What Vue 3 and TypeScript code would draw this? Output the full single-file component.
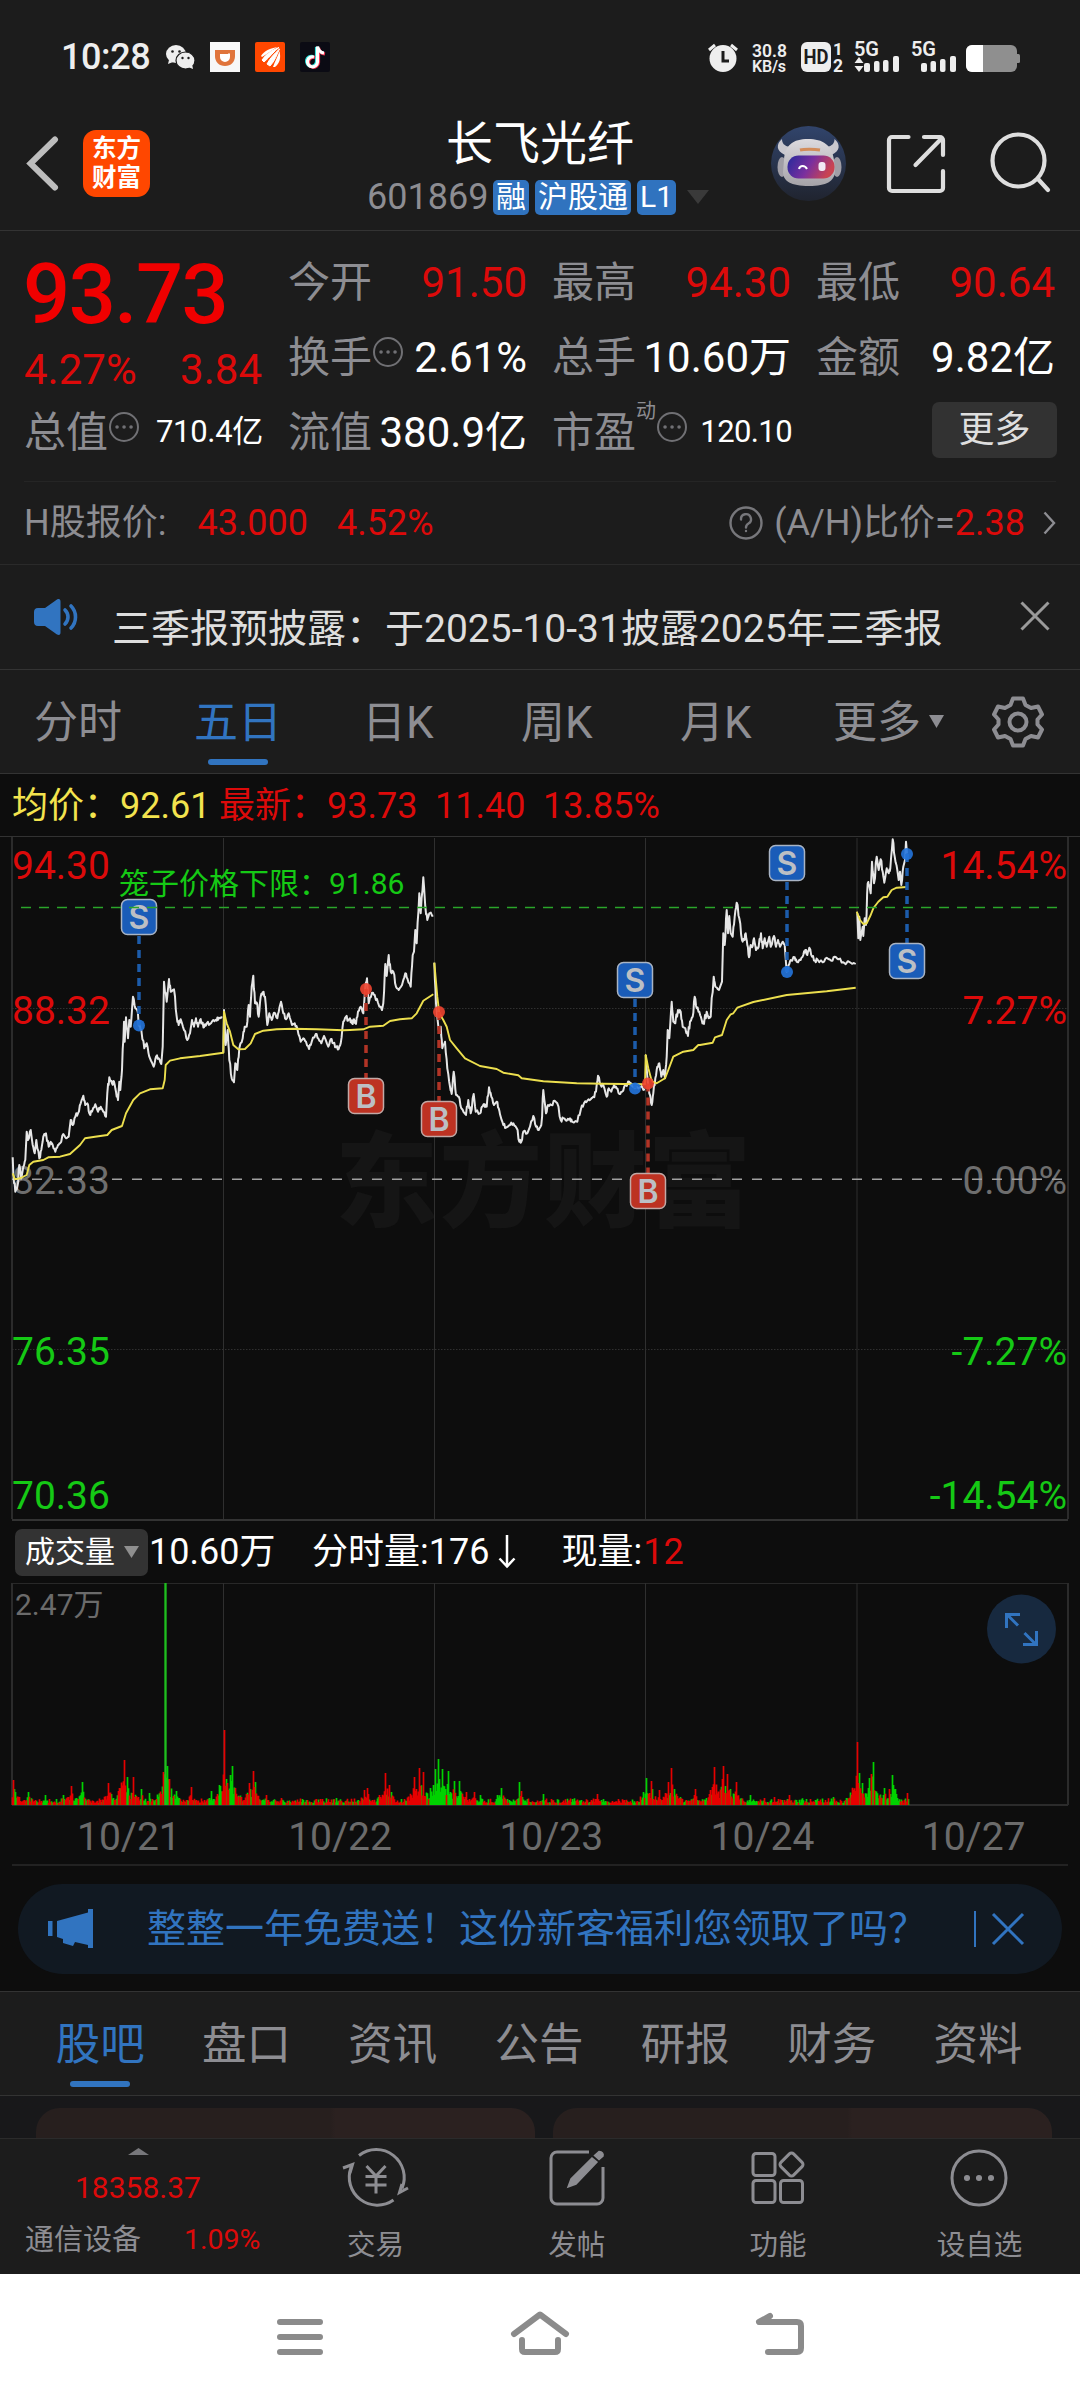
<script setup lang="ts">
interface Quote {
  label: string
  value: string
  tone: 'up' | 'plain'
  info?: boolean
  sup?: string
  small?: boolean
}
interface Marker {
  kind: 'S' | 'B'
  x: number
  box: number
  dot: number
}

const quotes: (Quote | null)[][] = [
  [
    { label: '今开', value: '91.50', tone: 'up' },
    { label: '最高', value: '94.30', tone: 'up' },
    { label: '最低', value: '90.64', tone: 'up' },
  ],
  [
    { label: '换手', value: '2.61%', tone: 'plain', info: true },
    { label: '总手', value: '10.60万', tone: 'plain' },
    { label: '金额', value: '9.82亿', tone: 'plain' },
  ],
  [
    { label: '流值', value: '380.9亿', tone: 'plain' },
    { label: '市盈', value: '120.10', tone: 'plain', info: true, sup: '动', small: true },
    null,
  ],
]

const dates = ['10/21', '10/22', '10/23', '10/24', '10/27']
const newsTabs = ['股吧', '盘口', '资讯', '公告', '研报', '财务', '资料']

const markers: Marker[] = [
  { kind: 'S', x: 139, box: 917, dot: 1025.5 },
  { kind: 'B', x: 366, box: 1096, dot: 989 },
  { kind: 'B', x: 439, box: 1119, dot: 1012 },
  { kind: 'S', x: 635, box: 980, dot: 1088.5 },
  { kind: 'B', x: 648, box: 1191, dot: 1083.5 },
  { kind: 'S', x: 787, box: 863, dot: 972 },
  { kind: 'S', x: 907, box: 961, dot: 854 },
]

// Samples are stored in thirds of a pixel, relative to the left edge of their block.
const ORIGIN_Y = 830
const UNIT = 3

type Block = [number, string]

function hash(n: number): number {
  const v = Math.sin(n * 127.1) * 43758.5453
  return v - Math.floor(v)
}

function parse(blocks: Block[]): number[][] {
  const out: number[][] = []
  for (const [ox, text] of blocks) {
    for (const pair of text.trim().split(/\s+/)) {
      const [x, y] = pair.split(',').map(Number)
      out.push([ox + x / UNIT, ORIGIN_Y + y / UNIT])
    }
  }
  return out
}

function toPath(points: number[][]): string {
  return 'M' + points.map((p) => p[0].toFixed(1) + ' ' + p[1].toFixed(1)).join('L')
}

function jagged(blocks: Block[]): string {
  const pts = parse(blocks)
  const out: number[][] = [pts[0]]
  for (let i = 1; i < pts.length; i++) {
    const [ax, ay] = pts[i - 1]
    const [bx, by] = pts[i]
    const swing = (hash(i * 3.7 + ax) - 0.5) * (Math.abs(by - ay) > 12 ? 9 : 4.5)
    if (bx - ax > 1.4) {
      out.push([ax + (bx - ax) * 0.36, ay + (by - ay) * 0.36 + swing])
      out.push([ax + (bx - ax) * 0.68, ay + (by - ay) * 0.68 - swing * 0.6])
    }
    out.push([bx, by])
  }
  return toPath(out)
}

const priceLines: string[] = [
  jagged([[0, '38,982 40,1030 46,1085 52,1070 58,1005 64,1045 70,1010 76,990 80,905 84,930 92,900 98,945 104,970 109,930 118,985 124,960 130,920 138,910 146,950 152,935 158,945 166,965 174,945 180,940 190,912 198,925 206,920 212,870 218,885 226,860 234,850 242,820 250,797 256,825 262,820 268,850 276,845 286,823 294,845 302,830 310,845 318,860 322,790 328,742 336,760 342,755 348,785 354,810 358,755 361,780 366,720 372,575 374,635 378,562 384,625 388,570 392,590 399,500 406,535 412,540 417,587 424,600 433,655 440,640 448,680 461,710 468,680 476,685 484,702 488,650 492,455 500,515 507,447 512,485 522,478 530,560 536,585 542,568 552,600 562,630 570,610 576,570 582,590 588,565 594,590 600,570 606,580 612,592 620,580 630,582 640,570 650,572 656,563 667,563']]),
  jagged([
    [0, '670,668 672,540 677,645 683,600 688,690 695,745 702,757 706,700 712,720 718,655 728,625 734,590 740,590 746,525 750,560 755,470 760,437 765,520 770,518 776,560 782,500 788,487 795,500 802,585 808,550 815,570 822,548 832,565 838,535 843,515 850,550 858,568 866,550 876,585 884,580 892,595 902,635 910,625 918,635 927,657 935,635 947,612 955,625 964,640 972,618 985,650 992,628 1000,640 1008,652 1016,657 1022,640 1030,575 1038,560 1044,572'],
    [350, '0,565 6,580 12,568 18,582 24,545 32,530 40,550 46,470 51,445 56,520 66,488 74,495 84,518 96,540 100,520 106,402 110,438 116,375 122,425 130,425 138,470 146,480 156,465 166,430 172,445 182,470 188,375 192,365 196,300 200,340 208,190 212,250 220,142 226,230 232,270 238,250 250,257'],
  ]),
  jagged([[350, '253,398 258,520 262,560 266,600 272,590 277,655 285,635 292,715 300,770 305,792 311,725 318,795 326,800 334,835 344,850 348,855 355,810 362,850 371,792 377,845 390,850 396,830 402,822 410,830 417,772 424,800 432,825 440,815 446,835 452,860 460,885 468,893 480,885 490,880 500,895 508,935 514,935 520,905 532,910 540,890 550,858 558,890 566,900 574,885 580,780 588,850 594,825 604,825 614,812 622,820 632,870 640,865 650,872 660,865 666,875 682,875 692,840 702,820 712,812 722,808 730,800 738,785 744,737 752,765 760,765 770,800 776,775 784,785 792,765 800,775 808,792 816,785 826,765 838,755 844,765 855,775 870,772 885,778']]),
  jagged([
    [350, '887,675 892,740 898,790 905,825 910,790 916,745 922,710 928,700 934,740 940,720 945,745 950,680 953,600 958,625 965,515 970,575 976,580 984,540 992,545 998,590 1006,595 1014,618 1020,575 1028,560 1034,500 1040,535 1048,545'],
    [700, '5,570 12,582 20,545 26,565 32,560 41,440 46,470 57,480 66,455 70,310 74,345 80,240 84,310 88,258 92,310 98,320 104,260 110,218 118,265 126,330 132,330 137,310 142,345 147,382 152,345 156,352 162,325 168,360 176,350 183,310 188,355 194,325 200,350 208,320 212,350 222,318 228,350 234,330 240,350 248,335 254,345 260,425 266,405 272,390 284,382 290,395 302,390 310,375 316,360 322,375 328,353 336,380 345,392 352,388 368,397 380,383 394,392 404,380 415,388 430,397 450,397 467,402'],
  ]),
  jagged([[700, '472,250 475,325 478,260 481,330 488,290 490,318 494,265 498,285 503,160 508,165 512,190 516,95 522,160 530,80 536,120 542,88 548,125 553,158 560,115 566,130 571,115 578,28 584,80 592,120 596,150 600,125 604,165 610,110 615,90 618,35 621,70']]),
]

const averageLines: string[] = [
  toPath(parse([[0, '38,1030 45,1048 60,1045 80,1035 88,1005 100,995 130,990 145,982 180,980 210,972 240,945 255,925 285,920 322,915 335,900 366,888 378,850 400,810 420,790 450,778 488,775 494,750 497,705 510,692 540,685 600,678 670,668 672,545 680,580 690,605 700,645 715,658 735,657 752,640 765,612 790,602 830,598 880,596 950,598 1030,601'], [350, '0,600 40,598 60,590 100,587 120,573 150,568 185,565 200,550 220,512 250,493']])),
  toPath(parse([[350, '253,398 262,500 268,550 280,570 290,590 300,630 320,655 345,685 390,708 440,717 460,728 505,736 515,745 580,754 680,760 760,761 885,763 887,675 895,715 903,745 908,755 920,760 945,745 955,720 970,680 1000,665 1030,660 1045,645'], [700, '0,645 38,638 45,622 66,615 80,570 92,553 100,550 112,533 160,516 260,495 380,484 467,473']])),
  toPath(parse([[700, '470,245 480,270 490,282 500,280 512,255 520,235 535,215 550,202 562,200 575,180 590,173 620,171']])),
]

// Volume peaks: x, height, direction (1 = up, 0 = down)
const peaks: [number, number, number][] = [
  [13, 25, 1], [15, 13, 0], [28, 13, 0], [45, 10, 0], [63, 10, 0], [71, 19, 1], [82, 23, 0], [108, 22, 1], [118, 11, 0],
  [124, 45, 1], [127, 28, 0], [133, 28, 1], [141, 16, 0], [149, 12, 0], [163, 33, 1], [165, 222, 0], [167, 39, 0], [169, 26, 1],
  [176, 14, 0], [191, 18, 1], [211, 14, 0], [219, 20, 0], [224, 75, 1], [226, 26, 0], [230, 30, 0], [232, 39, 0], [235, 17, 1],
  [249, 22, 1], [253, 34, 1], [255, 23, 0], [266, 10, 1], [281, 7, 1], [300, 6, 0], [336, 7, 0], [364, 15, 1], [367, 17, 1],
  [385, 32, 1], [389, 20, 1], [391, 13, 0], [414, 28, 1], [419, 37, 1], [423, 33, 1], [430, 17, 0], [435, 36, 0], [438, 46, 0],
  [442, 36, 0], [448, 34, 0], [454, 24, 0], [459, 24, 0], [466, 13, 1], [474, 13, 1], [480, 10, 0], [497, 10, 0], [501, 17, 0],
  [519, 23, 0], [521, 14, 1], [543, 11, 0], [597, 11, 1], [624, 5, 1], [646, 27, 0], [651, 24, 1], [659, 15, 1], [668, 23, 1],
  [671, 37, 1], [674, 16, 0], [695, 16, 1], [714, 38, 1], [723, 39, 1], [727, 31, 1], [730, 16, 0], [736, 23, 1], [750, 10, 0],
  [764, 7, 1], [774, 8, 1], [789, 10, 1], [833, 8, 0], [853, 14, 0], [857, 63, 1], [859, 32, 0], [862, 22, 0], [869, 27, 0],
  [871, 31, 1], [873, 43, 0], [884, 17, 0], [889, 16, 1], [892, 30, 0], [895, 16, 0], [907, 12, 1],
]
const VOLUME_BASE = 1805

function volumeBars(): { up: string; down: string } {
  const bars: Record<'up' | 'down', string> = { up: '', down: '' }
  for (let x = 12; x < 909; x += 1) {
    const n = hash(x * 1.37)
    let h = 2.2 + n * n * 4.5
    let up = hash(x * 5.11) > 0.5
    for (const [px, ph, dir] of peaks) {
      const d = Math.abs(px - x)
      const local = d === 0 ? ph : Math.min(ph, 46) * 0.62 * Math.exp(-d / 7) * (0.5 + n * 0.75)
      if (local > h) {
        h = local
        if (d === 0) up = dir === 1
        else if (d < 8) up = hash(x * 9.3) < (dir === 1 ? 0.72 : 0.28)
      }
    }
    bars[up ? 'up' : 'down'] += `M${x + 0.5} ${VOLUME_BASE}v${(-h).toFixed(1)}`
  }
  return bars
}
const volume = volumeBars()
</script>

<template>
  <div class="screen">
    <div class="status">
      <span class="clock">10:28</span>
      <svg class="apps" width="166" height="32" viewBox="165 41 166 32">
        <ellipse cx="176" cy="54" rx="10" ry="9" fill="#eee" />
        <path d="M169 60l-1 4 5-2z" fill="#eee" />
        <circle cx="172.500" cy="51.500" r="1.300" fill="#1c1c1c" /><circle cx="179.500" cy="51.500" r="1.300" fill="#1c1c1c" />
        <ellipse cx="185.500" cy="60.500" rx="9.500" ry="8.500" fill="#eee" stroke="#1c1c1c" stroke-width="1.200" />
        <path d="M188 67l5 2-1-5z" fill="#eee" />
        <circle cx="182.500" cy="58" r="1.200" fill="#1c1c1c" /><circle cx="188.500" cy="58" r="1.200" fill="#1c1c1c" />
        <rect x="210" y="42" width="30" height="30" fill="#f7f7f7" />
        <path d="M215 50h20v6c0 6-4 10-10 10s-10-4-10-10z" fill="#e0743b" />
        <path d="M220 54h8l1-1 1 1v3a5 5 0 0 1-10 0z" fill="#fff" />
        <rect x="255" y="42" width="30" height="30" rx="2" fill="#ff4700" />
        <g fill="#fff">
          <path d="M261 56C264 51 270 48 278 47C273 49 269 53 262 57z" />
          <path d="M262 60C266 54 272 50 279 47.500C274 51 270 57 264 62z" stroke="#fff" />
          <path d="M267 64C270 58 275 53 279.500 49C277 54 275 61 270 66z" stroke="#fff" />
          <path d="M273 67C275 61 278 56 279.500 51C281 58 280 63 275 67z" />
        </g>
        <rect x="300" y="42" width="30" height="30" rx="2" fill="#0b0b14" />
        <g fill="none" stroke-width="3.200">
          <path d="M313 56.500a5 5 0 1 0 3.500 5V47c1 4 3 5.500 6.500 6" stroke="#25e0dc" />
          <path d="M315 57.500a5 5 0 1 0 3.500 5V48c1 4 3 5.500 6.500 6" stroke="#f5304f" />
          <path d="M314 57a5 5 0 1 0 3.500 5V46.500c1 4.500 3 6 6.500 6.500" stroke="#fff" />
        </g>
      </svg>
      <svg class="signals" width="316" height="50" viewBox="706 32 316 50" fill="#eee">
        <circle cx="723" cy="58.500" r="13.500" />
        <path d="M709 50l6-5M737 50l-6-5" stroke="#eee" stroke-width="3" />
        <path d="M723 51v10h6" stroke="#1c1c1c" stroke-width="3" fill="none" />
        <text x="752" y="56.500" font-size="18.500" font-weight="600" textLength="35" lengthAdjust="spacingAndGlyphs">30.8</text>
        <text x="752" y="71.500" font-size="16" font-weight="600" textLength="34">KB/s</text>
        <rect x="801" y="42" width="30" height="30" rx="6" />
        <text x="803.500" y="64" font-size="19.500" font-weight="700" textLength="25" lengthAdjust="spacingAndGlyphs" fill="#1c1c1c">HD</text>
        <text x="833" y="54.500" font-size="17" font-weight="700">1</text>
        <text x="833" y="72" font-size="17.500" font-weight="700">2</text>
        <text x="854" y="56" font-size="20" font-weight="600" textLength="25">5G</text>
        <path d="M859 57l4.500 6h-9zM859 72l4.500-6h-9z" />
        <rect x="864" y="63" width="6" height="9" rx="2" /><rect x="874" y="61" width="5.500" height="11" rx="2" /><rect x="883" y="60" width="5.500" height="12" rx="2" /><rect x="893" y="56" width="6" height="16" rx="2" />
        <text x="911" y="56" font-size="20" font-weight="600" textLength="25">5G</text>
        <rect x="921" y="63" width="6" height="9" rx="2" /><rect x="930.500" y="61" width="5.500" height="11" rx="2" /><rect x="940" y="59" width="5.500" height="13" rx="2" /><rect x="950" y="56" width="6" height="16" rx="2" />
        <rect x="966" y="45" width="51" height="27" rx="6" fill="#8f8f8f" />
        <path d="M972 45h11v27h-11a6 6 0 0 1-6-6V51a6 6 0 0 1 6-6z" fill="#fff" />
        <rect x="1015" y="54" width="5" height="9" rx="1.500" fill="#8f8f8f" />
      </svg>
    </div>

    <header class="header">
      <div class="head-left">
        <svg width="34" height="60" viewBox="25 133 34 60"><path d="M55 139.500L30.500 163.500L55 187.500" fill="none" stroke="#bdbdbd" stroke-width="6" stroke-linecap="round" /></svg>
        <div class="logo"><span>东方</span><span>财富</span></div>
      </div>
      <div class="title-block">
        <h1>长飞光纤</h1>
        <div class="code-row">
          <span class="code">601869</span>
          <span class="tag one">融</span>
          <span class="tag three">沪股通</span>
          <span class="tag level">L1</span>
          <svg class="drop" width="22" height="14"><path d="M0 0h22L11 14z" fill="#3a3a3a" /></svg>
        </div>
      </div>
      <div class="head-right">
        <svg width="282" height="78" viewBox="770 125 282 78" fill="none">
          <defs>
            <linearGradient id="visor" x1="0" x2="1" y1="0" y2=".3">
              <stop offset="0" stop-color="#252a9c" /><stop offset=".55" stop-color="#7a2f9e" /><stop offset="1" stop-color="#c94352" />
            </linearGradient>
            <linearGradient id="sky" x1="0" x2="0" y1="0" y2="1">
              <stop offset="0" stop-color="#31446b" /><stop offset="1" stop-color="#20242f" />
            </linearGradient>
            <linearGradient id="shell" x1="0" x2="0" y1="0" y2="1">
              <stop offset="0" stop-color="#dcdade" /><stop offset="1" stop-color="#a5a3a8" />
            </linearGradient>
          </defs>
          <circle cx="808.500" cy="163.500" r="37.500" fill="url(#sky)" />
          <path d="M782 139c-6 5-6 12 3 16l5-8c-6-1-8-4-8-8zM834.500 139c6 5 6 12-3 16l-5-8c6-1 8-4 8-8z" fill="#c9c8ce" />
          <ellipse cx="782" cy="167" rx="4.500" ry="10" fill="#a09ea6" /><ellipse cx="837" cy="167" rx="4.500" ry="10" fill="#a09ea6" />
          <path d="M784 160c1-15 9-21 24-21s24 6 26 21l1 12c-1 9-8 14-26 14s-26-5-26-14z" fill="url(#shell)" />
          <rect x="787.500" y="155.500" width="47" height="23" rx="11" fill="url(#visor)" />
          <path d="M799 169c1-4 6-4 8 0" stroke="#fff" stroke-width="2" />
          <rect x="818.500" y="162" width="7" height="9" rx="3" fill="#f2e9f4" />
          <path d="M800 150c4-1 14-1 20 0" stroke="#d38c5a" stroke-width="3" />
          <g stroke="#dedede" stroke-width="4.200" stroke-linecap="round" stroke-linejoin="round">
            <path d="M908.500 137H892a3 3 0 0 0-3 3v48a3 3 0 0 0 3 3h48a3 3 0 0 0 3-3v-17M924 137h16a3 3 0 0 1 3 3v15M915.500 165L942 138" />
            <circle cx="1018.500" cy="160.500" r="26" />
            <path d="M1038 179l10 11" />
          </g>
        </svg>
      </div>
    </header>

    <section class="quote">
      <div class="grid">
        <div class="main-col">
          <div class="price">93.73</div>
          <div class="change"><span>4.27%</span><span>3.84</span></div>
          <div class="cell">
            <span class="lab">总值</span>
            <svg class="info" width="30" height="30"><circle cx="15" cy="15" r="14" /><path d="M8 15h.1M15 15h.1M22 15h.1" /></svg>
            <span class="val small">710.4亿</span>
          </div>
        </div>
        <div class="rows">
          <div v-for="(row, r) in quotes" :key="r" class="row">
            <template v-for="(q, c) in row" :key="c">
              <div v-if="q" class="cell">
                <span class="lab">{{ q.label }}</span>
                <span v-if="q.sup" class="sup">{{ q.sup }}</span>
                <svg v-if="q.info" class="info" width="30" height="30"><circle cx="15" cy="15" r="14" /><path d="M8 15h.1M15 15h.1M22 15h.1" /></svg>
                <span class="val" :class="[q.tone, { small: q.small }]">{{ q.value }}</span>
              </div>
              <div v-else class="cell end"><button class="more">更多</button></div>
            </template>
          </div>
        </div>
      </div>
      <div class="h-share">
        <span>H股报价:</span><span class="red first">43.000</span><span class="red second">4.52%</span>
        <svg class="help" width="34" height="34"><circle cx="17" cy="17" r="15.500" /><path d="M12 13.500a5 5 0 1 1 7.500 4c-2 1.200-2.500 2-2.500 4M17 25v.1" /></svg>
        <span>(A/H)比价=<b>2.38</b></span>
        <svg class="chev" width="13" height="24"><path d="M1.500 1.500L11 12L1.500 22.500" /></svg>
      </div>
    </section>

    <section class="notice">
      <svg width="46" height="38" viewBox="33 597 46 38" fill="#3174c0">
        <path d="M38 607h7l12-8.500c2.500-1 3.500 0 3.500 2v31c0 2-1 3-3.500 2L45 625h-7c-3 0-4-2-4-4v-10c0-2 1-4 4-4z" />
        <path d="M65 609c4 4 4 10 0 14M71 605c6 6 6 16 0 22" fill="none" stroke="#3174c0" stroke-width="3.600" stroke-linecap="round" />
      </svg>
      <p>三季报预披露：于2025-10-31披露2025年三季报</p>
      <svg class="close" width="30" height="30"><path d="M1.500 1.500l27 27M28.500 1.500l-27 27" /></svg>
    </section>

    <nav class="period">
      <span class="t1">分时</span><span class="t2 active">五日</span><span class="t3">日K</span><span class="t4">周K</span><span class="t5">月K</span><span class="t6">更多</span>
      <svg class="tri" width="15" height="13"><path d="M0 0h15L7.500 13z" fill="#8d8d92" /></svg>
      <svg class="gear" width="54" height="54" viewBox="-27 -27 54 54" fill="none" stroke="#8d8d92" stroke-width="4">
        <path d="M-5-23.500H5L7.500-17L13-14L20-15.500L24-7.500L19.500-2.500V2.500L24 7.500L20 15.500L13 14L7.500 17L5 23.500H-5L-7.500 17L-13 14L-20 15.500L-24 7.500L-19.500 2.500V-2.500L-24-7.500L-20-15.500L-13-14L-7.500-17z" stroke-linejoin="round" />
        <circle r="8.500" />
      </svg>
    </nav>

    <section class="market">
      <div class="averages">
        <span class="avg">均价：92.61</span><span class="red latest">最新：93.73</span><span class="red delta">11.40</span><span class="red pct">13.85%</span>
      </div>

      <svg class="chart" width="1080" height="686" viewBox="0 835 1080 686">
        <text class="watermark" x="335" y="1219" font-size="103" textLength="416">东方财富</text>
        <path d="M0 836.500H1080" stroke="#323232" />
        <path d="M12 837V1519M1068 837V1519" stroke="#2b2b2b" stroke-width="2" />
        <path d="M223.500 838V1519M434.500 838V1519M645.500 838V1519M857 838V1519" stroke="#2f2f2f" />
        <path d="M12 1008.500H1068M12 1349.500H1068" stroke="#303030" stroke-dasharray="1.500 1.500" />
        <path d="M12 1520H1068" stroke="#333" stroke-width="2" />

        <g class="axis" font-size="39">
          <text x="12" y="879" class="up">94.30</text>
          <text x="12" y="1023.500" class="up">88.32</text>
          <text x="12" y="1193.500" class="flat">82.33</text>
          <text x="12" y="1365" class="down">76.35</text>
          <text x="12" y="1509" class="down">70.36</text>
          <g text-anchor="end">
            <text x="1067" y="879" class="up">14.54%</text>
            <text x="1067" y="1023.500" class="up">7.27%</text>
            <text x="1067" y="1193.500" class="flat">0.00%</text>
            <text x="1067" y="1365" class="down">-7.27%</text>
            <text x="1067" y="1509" class="down">-14.54%</text>
          </g>
        </g>
        <text x="119" y="893.500" font-size="30" class="down">笼子价格下限：91.86</text>

        <path d="M12 1179.200H1062" stroke="#a0a0a0" stroke-width="1.500" stroke-dasharray="10 10" />
        <g fill="none" stroke-linejoin="round">
          <path v-for="(d, i) in priceLines" :key="'p' + i" :d="d" stroke="#e6e6e6" stroke-width="2" />
          <path v-for="(d, i) in averageLines" :key="'a' + i" :d="d" stroke="#ecdf4e" stroke-width="1.900" />
        </g>
        <g v-for="(m, i) in markers" :key="i" :class="m.kind === 'S' ? 'sell' : 'buy'">
          <path class="stem" :d="m.box < m.dot ? `M${m.x} ${m.box + 19}V${m.dot}` : `M${m.x} ${m.dot}V${m.box - 17}`" />
          <circle :cx="m.x" :cy="m.dot" r="6" />
          <rect :x="m.x - 17.500" :y="m.box - 17.500" width="35" height="35" rx="6" />
          <text :x="m.x" :y="m.box + 11.500" font-size="32" text-anchor="middle">{{ m.kind }}</text>
        </g>
        <path d="M21 907.500H1058" stroke="#2aa52a" stroke-width="1.300" stroke-dasharray="10 8" />
      </svg>

      <div class="vol-head">
        <div class="vol-btn">成交量<svg width="15" height="12"><path d="M0 0h15L7.500 12z" fill="#8f8f8f" /></svg></div>
        <span class="v1">10.60万</span><span class="v2">分时量:176</span>
        <svg class="arrow" width="18" height="34"><path d="M9 0v31M1.500 23.500L9 31.500L16.500 23.500" fill="none" stroke="#fff" stroke-width="2.500" /></svg>
        <span class="v3">现量:<i>12</i></span>
      </div>

      <svg class="chart" width="1080" height="224" viewBox="0 1583 1080 224">
        <path d="M12 1583.500H1068" stroke="#282828" />
        <path d="M12 1583V1805M1068 1583V1805" stroke="#2b2b2b" stroke-width="2" />
        <path d="M223.500 1583V1805M434.500 1583V1805M645.500 1583V1805M857 1583V1805" stroke="#2f2f2f" />
        <path d="M12 1805H1068" stroke="#2b2b2b" stroke-width="2" />
        <text x="15" y="1615" font-size="30" fill="#6b6b6b">2.47万</text>
        <path :d="volume.down" stroke="#00d200" stroke-width="1.700" />
        <path :d="volume.up" stroke="#e60000" stroke-width="1.700" />
        <path d="M165.500 1805V1583" stroke="#22bb22" stroke-width="2" />
        <circle cx="1021.500" cy="1629" r="34.500" fill="#17293f" />
        <path d="M1018 1625.500L1007 1614.500M1020 1614.500H1006.500V1628M1024.500 1633L1036 1644.500M1023 1644.500H1036.500V1631" fill="none" stroke="#3174c0" stroke-width="3" />
      </svg>

      <div class="dates"><span v-for="d in dates" :key="d">{{ d }}</span></div>

      <div class="banner">
        <svg width="46" height="40" viewBox="47 1909 46 40" fill="#3174c0"><path d="M48 1921h4.500v15H48zM57 1921l31-8.500V1909h5v39h-5v-3l-13-3-2 4-10-3v-4l-6-2z" /></svg>
        <p>整整一年免费送！这份新客福利您领取了吗？</p>
        <i></i>
        <svg class="bclose" width="34" height="34"><path d="M2 2l30 30M32 2L2 32" /></svg>
      </div>
    </section>

    <nav class="news-tabs">
      <span v-for="(t, i) in newsTabs" :key="t" :class="{ active: i === 0 }">{{ t }}</span>
    </nav>

    <section class="cards"><div></div><div></div></section>

    <footer class="bottom">
      <div class="index">
        <svg width="21" height="7"><path d="M0 7L10.500 0L21 7z" fill="#77777b" /></svg>
        <div class="points">18358.37</div>
        <div class="sector"><span>通信设备</span><span class="red">1.09%</span></div>
      </div>
      <div class="action">
        <svg width="68" height="60" viewBox="-34 -30 68 60">
          <path d="M-17-22.500A28 28 0 0 1 26 10.500M17.500 22A28 28 0 0 1-25-10.500M-33-10L-23.500-13.500L-26-5M32 10L23.500 14.500L26 6" />
          <path d="M-9.500-12L0-2L9.500-12M0-2V15.500M-10.500-1.500H10.500M-10.500 7H10.500" />
        </svg><span>交易</span>
      </div>
      <div class="action">
        <svg width="60" height="60" viewBox="-30 -30 60 60">
          <path d="M12-26H-20a6 6 0 0 0-6 6V20a6 6 0 0 0 6 6H20a6 6 0 0 0 6-6V-11" />
          <path d="M-9 9L-6 1L15-20L20-16L-1 6zM17.500-22.500L22-26.500Q27-26 26-22L22-18.500z" class="solid" />
        </svg><span>发帖</span>
      </div>
      <div class="action">
        <svg width="60" height="60" viewBox="-30 -30 60 60">
          <rect x="-25" y="-24.500" width="22" height="22" rx="3" /><rect x="-25" y="2.500" width="22" height="22" rx="3" /><rect x="2.500" y="2.500" width="22" height="22" rx="3" />
          <rect x="4.500" y="-22.500" width="18" height="18" rx="3" transform="rotate(45 13.500 -13.500)" />
        </svg><span>功能</span>
      </div>
      <div class="action">
        <svg width="60" height="60" viewBox="-30 -30 60 60"><circle r="27" /><g class="solid"><circle cx="-12" r="2.300" /><circle r="2.300" /><circle cx="12" r="2.300" /></g></svg><span>设自选</span>
      </div>
    </footer>

    <div class="sysnav">
      <svg width="1080" height="126" viewBox="0 2274 1080 126" fill="none" stroke="#8b8b8b" stroke-width="6" stroke-linecap="round" stroke-linejoin="round">
        <path d="M280 2322H320M280 2337H320M280 2352H320" />
        <path d="M514 2334L540 2314.500L566 2334M522 2340V2349Q522 2352 525 2352H555Q558 2352 558 2349V2340" />
        <path d="M770 2316L759 2322H797Q801 2322 801 2326V2348Q801 2352 797 2352H768" />
      </svg>
    </div>
  </div>
</template>

<style>
body { margin: 0; background: #1c1c1c; }
</style>

<style scoped>
.screen {
  width: 1080px;
  height: 2400px;
  overflow: hidden;
  background: #1c1c1c;
  color: #8d8d92;
  font-family: Roboto, "Noto Sans CJK SC", sans-serif;
}
svg { display: block; flex: none; }
span { white-space: nowrap; }
.red { color: #dc0a0a; }

.status { height: 114px; display: flex; align-items: center; padding: 0 58px 0 61px; box-sizing: border-box; }
.clock { font-size: 36px; font-weight: 500; color: #eee; letter-spacing: -0.4px; width: 104px; }
.signals { margin-left: auto; overflow: visible; }

.header { height: 116px; display: grid; grid-template-columns: 1fr auto 1fr; border-bottom: 1px solid #333; }
.head-left { display: flex; align-items: center; padding-left: 25px; gap: 24px; height: 98px; }
.logo {
  width: 67px; height: 67px; border-radius: 13px; background: #ff4700; color: #fff;
  display: flex; flex-direction: column; align-items: center; justify-content: center;
  font-size: 24.500px; font-weight: 700; line-height: 29px;
}
.title-block { padding-top: 2px; text-align: center; }
h1 { margin: 0; font-size: 47px; line-height: 56px; font-weight: 400; color: #fff; }
.code-row { display: flex; align-items: center; height: 36px; margin: 7px 4px 0 0; }
.code { font-size: 36px; width: 121px; }
.tag { height: 35px; line-height: 34px; margin-left: 6px; border-radius: 5px; background: #3073bf; color: #fff; font-size: 30px; text-align: center; }
.tag.one { width: 36px; margin-left: 5px; }
.tag.three { width: 96px; }
.tag.level { width: 39px; }
.drop { margin-left: 11px; }
.head-right { display: flex; justify-content: flex-end; align-items: center; padding-right: 28px; height: 99px; }

.quote { height: 333px; border-bottom: 1px solid #2a2a2a; }
.grid { display: grid; grid-template-columns: 238px 1fr; column-gap: 26px; padding: 14px 25px 0 24px; height: 250px; box-sizing: border-box; }
.main-col { color: #e60000; }
.price { font-size: 83px; font-weight: 500; color: #f00000; line-height: 100px; margin-left: -1px; letter-spacing: -1.500px; }
.change { display: flex; justify-content: space-between; font-size: 42px; line-height: 50px; height: 50px; color: #dc0a0a; }
.main-col .cell { margin-top: 0; }
.row { display: grid; grid-template-columns: repeat(3, 238px); column-gap: 26px; height: 75px; }
.cell { display: flex; height: 75px; line-height: 75px; font-size: 42px; align-items: baseline; }
.lab { color: #8d8d92; }
.info { align-self: flex-start; margin: 17px 0 0 1px; fill: none; stroke: #707074; stroke-width: 2; }
.info path { stroke-width: 3.500; stroke-linecap: round; }
.sup { font-size: 20px; align-self: flex-start; line-height: 32px; }
.val { margin: 0 -1px 0 auto; color: #fff; }
.val.up { color: #dc0a0a; }
.val.small { font-size: 31px; align-self: flex-start; line-height: 74px; letter-spacing: -0.300px; }
.sup ~ .val.small { letter-spacing: -0.600px; margin-right: -2px; }
.cell.end { justify-content: flex-end; align-items: flex-start; }
.more {
  width: 125px; height: 56px; margin: 7px -3px 0 0; padding: 0; border: 0; border-radius: 7px; background: #323232;
  color: #dedede; font: 36px/52px Roboto, "Noto Sans CJK SC", sans-serif;
}
.h-share { display: flex; align-items: center; margin: 0 24px; border-top: 1px solid #252525; height: 82px; font-size: 36px; line-height: 80px; }
.first { margin-left: 31px; }
.second { margin-left: 29px; }
.help { margin-left: auto; margin-right: 11px; fill: none; stroke: #77777b; stroke-width: 2.400; stroke-linecap: round; }
.h-share b { font-weight: 400; color: #dc0a0a; }
.chev { margin-left: 18px; fill: none; stroke: #8d8d92; stroke-width: 2.400; }

.notice { height: 104px; display: flex; align-items: flex-start; padding-left: 33px; border-bottom: 1px solid #333; }
.notice > svg { margin-top: 33px; }
.notice p { margin: 39px 0 0 33px; font-size: 39px; line-height: 50px; color: #dedede; width: 908px; white-space: nowrap; }
.notice .close { margin-top: 36px; fill: none; stroke: #9a9a9a; stroke-width: 3; }

.period { height: 103px; display: flex; align-items: flex-start; border-bottom: 1px solid #333; font-size: 44px; line-height: 106px; padding-left: 34px; }
.period span { flex: none; height: 104px; }
.t1, .t2, .t6 { width: 88px; }
.t2 { margin-left: 72px; }
.t3 { margin-left: 80px; }
.t3, .t4, .t5 { width: 74px; }
.t4 { margin-left: 85px; }
.t5 { margin-left: 85px; }
.t6 { margin-left: 79px; }
.period .active, .news-tabs .active { color: #3174c0; position: relative; }
.period .active::after, .news-tabs .active::after {
  content: ""; position: absolute; left: 50%; margin-left: -30px; bottom: 9px; width: 60px; height: 6px; border-radius: 3px; background: #3174c0;
}
.news-tabs .active::after { bottom: 8px; }
.tri { margin: 45px 0 0 8px; }
.gear { margin: 25px 0 0 47px; }

.market { background: #0d0d0d; height: 1217px; overflow: hidden; }
.averages { height: 61px; display: flex; font-size: 36px; line-height: 65px; padding-left: 12px; }
.avg { color: #f3e34e; width: 207px; }
.latest { width: 216px; }
.delta { width: 108px; }
.chart { font-family: Roboto, "Noto Sans CJK SC", sans-serif; }
.watermark { font-weight: 900; fill: #151515; }
.axis .up { fill: #dc0a0a; }
.axis .flat { fill: #6e6e6e; }
.chart .down { fill: #15c915; }
.stem { stroke-width: 3.500; stroke-dasharray: 8 6; fill: none; }
.sell .stem { stroke: #1c5cab; }
.buy .stem { stroke: #b23426; }
.sell circle { fill: #2474dc; fill-opacity: .9; }
.buy circle { fill: #ee4430; fill-opacity: .9; }
.sell rect { fill: #1a5cb8; stroke: #a9b4c4; stroke-width: 1.500; }
.buy rect { fill: #bd3222; stroke: #c2a9a6; stroke-width: 1.500; }
.sell text, .buy text { fill: #bcbfc4; font-weight: 600; font-family: Inter, Roboto, sans-serif; }

.vol-head { height: 62px; display: flex; align-items: center; color: #fff; font-size: 36px; padding-left: 15px; line-height: 62px; }
.vol-btn { width: 133px; height: 47px; border-radius: 7px; background: #333; display: flex; align-items: center; gap: 9px; padding-left: 10px; box-sizing: border-box; font-size: 30px; line-height: 44px; white-space: nowrap; }
.v1 { margin-left: 1px; width: 163px; }
.arrow { margin-left: 9px; }
.v3 { margin-left: 45px; }
.v3 i { font-style: normal; color: #dc0a0a; margin-left: 1px; }

.dates { display: grid; grid-template-columns: repeat(5, 211.200px); height: 57px; margin: 0 12px; border-bottom: 2px solid #222; color: #6b6b6b; font-size: 39px; line-height: 60px; }
.dates span { padding-left: 65px; }
.banner { height: 90px; margin: 18px 18px 0; border-radius: 45px; background: #111922; display: flex; align-items: center; padding-left: 29px; color: #3174c0; }
.banner p { margin: 0 0 0 54px; font-size: 39px; line-height: 86px; width: 827px; white-space: nowrap; }
.banner i { width: 1.500px; height: 36px; background: #3174c0; }
.bclose { margin-left: 15px; fill: none; stroke: #3174c0; stroke-width: 3; }

.news-tabs { height: 103px; border-top: 1px solid #333; border-bottom: 1px solid #333; display: grid; grid-template-columns: repeat(7, 146.300px); grid-template-rows: 103px; padding: 0 27px; font-size: 44.500px; line-height: 107px; text-align: center; }
.cards { height: 42px; background: #18181a; display: flex; gap: 18px; padding-left: 36px; overflow: hidden; border-bottom: 1px solid #2b2b2b; }
.cards div { width: 499px; height: 60px; margin-top: 12px; border-radius: 24px; background: linear-gradient(90deg, #271f1e 59%, #2b2120 60%); }

.bottom { height: 135px; display: flex; font-size: 28.500px; }
.index { width: 275px; }
.index > svg { margin: 9px 0 0 128px; }
.points { font-size: 30px; line-height: 40px; color: #dc0a0a; margin: 13px 0 0 75px; }
.sector { display: flex; padding-left: 25px; gap: 43px; line-height: 40px; margin-top: 12px; }
.sector span:first-child { font-size: 29px; }
.sector .red { font-size: 28.500px; }
.action { width: 201.300px; display: flex; flex-direction: column; align-items: center; }
.action svg { margin-top: 9px; fill: none; stroke: #8d8d92; stroke-width: 3; }
.action .solid { fill: #8d8d92; stroke: #8d8d92; stroke-width: 1.500; }
.action span { margin-top: 18px; line-height: 40px; }
.sysnav { height: 126px; background: #fff; }
</style>
